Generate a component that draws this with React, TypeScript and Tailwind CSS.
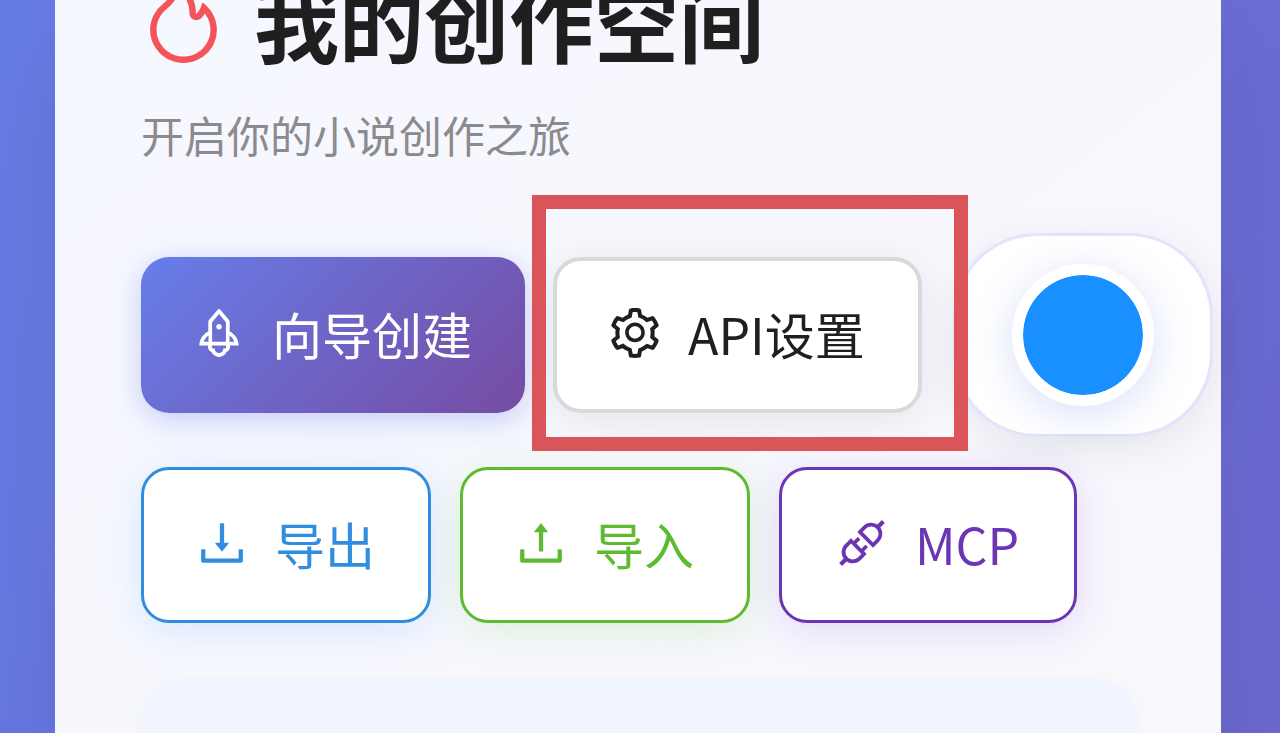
import type { ButtonHTMLAttributes } from "react";
import type { IconType } from "react-icons";
import clsx from "clsx";
import {
  AiOutlineApi,
  AiOutlineDownload,
  AiOutlineFire,
  AiOutlineRocket,
  AiOutlineSetting,
  AiOutlineUpload,
} from "react-icons/ai";

// The icon set is drawn with a 64 unit margin, crop it away
const ICON_BOX = "64 64 896 896";

interface ActionButtonProps extends ButtonHTMLAttributes<HTMLButtonElement> {
  icon: IconType;
  label: string;
}

const ActionButton = ({ icon: Icon, label, className, ...rest }: ActionButtonProps) => (
  <button
    type="button"
    className={clsx(
      "flex h-[156px] shrink-0 items-center gap-7 rounded-[28px] pb-1 text-[50px] leading-none whitespace-nowrap",
      className
    )}
    {...rest}
  >
    <Icon viewBox={ICON_BOX} className="size-[50px] shrink-0" />
    <span className="pb-px">{label}</span>
  </button>
);

const ThemeSwitch = () => (
  <button
    type="button"
    aria-label="切换主题"
    className="absolute -top-6 -right-[76px] flex h-[204px] w-[260px] items-center justify-center rounded-[84px] border-[3px] border-[#e0e5fb] bg-white shadow-[0_10px_40px_rgba(0,0,0,0.08)]"
  >
    <span className="size-[142px] rounded-full border-[11px] border-white bg-[#1890ff] bg-clip-padding shadow-[0_8px_40px_rgba(102,126,234,0.25)]" />
  </button>
);

const App = () => {
  return (
    <div className="h-screen overflow-hidden bg-[linear-gradient(115deg,#667ce6,#6c68d0)] pr-[59px] pl-[55px] font-['Noto_Sans_CJK_SC',sans-serif]">
      <main className="flow-root min-h-full bg-linear-to-br from-[#f6f8ff] to-[#f8f7fc] pr-[84px] pl-[86px] shadow-[0_28px_114px_rgba(0,0,0,0.08)]">
        <header className="-mt-8">
          <h1 className="flex items-center gap-7 text-[85px] leading-[104px] font-bold whitespace-nowrap text-[#1f1f1f]">
            <AiOutlineFire viewBox={ICON_BOX} className="size-[85px] shrink-0 text-[#f5535a]" />
            我的创作空间
          </h1>
          <p className="mt-7 text-[43px] leading-[68px] text-[#8b8b8e]">开启你的小说创作之旅</p>
        </header>

        <div className="mt-[89px] flex flex-col gap-[54px]">
          <div className="relative flex gap-7">
            <ActionButton
              icon={AiOutlineRocket}
              label="向导创建"
              className="bg-linear-[135deg,#667eea,#764ba2] px-[53px] text-white shadow-[0_7px_30px_rgba(102,126,234,0.35)]"
            />
            <ThemeSwitch />
            <div className="relative">
              <ActionButton
                icon={AiOutlineSetting}
                label="API设置"
                className="border-4 border-[#d9d9d9] bg-white px-[53px] text-[#1f1f1f] shadow-[0_7px_40px_rgba(0,0,0,0.08)]"
              />
              <div className="pointer-events-none absolute -top-[62px] -right-[46px] -bottom-[38px] -left-[21px] border-[14px] border-[#da555a]" />
            </div>
          </div>

          <div className="flex gap-[29px]">
            <ActionButton
              icon={AiOutlineDownload}
              label="导出"
              className="border-[3px] border-[#318ddf] bg-white px-[53px] text-[#318ddf] shadow-[0_7px_40px_rgba(24,144,255,0.15)]"
            />
            <ActionButton
              icon={AiOutlineUpload}
              label="导入"
              className="border-[3px] border-[#5cbb30] bg-white px-[53px] text-[#5cbb30] shadow-[0_7px_40px_rgba(82,196,26,0.15)]"
            />
            <ActionButton
              icon={AiOutlineApi}
              label="MCP"
              className="border-[3px] border-[#6b36b3] bg-white px-[55px] text-[#6b36b3] shadow-[0_7px_40px_rgba(114,46,209,0.15)]"
            />
          </div>
        </div>

        <section className="mt-14 h-60 rounded-[43px] bg-[#f0f5ff] shadow-[0_4px_14px_rgba(0,0,0,0.03)]" />
      </main>
    </div>
  );
};

export default App;
